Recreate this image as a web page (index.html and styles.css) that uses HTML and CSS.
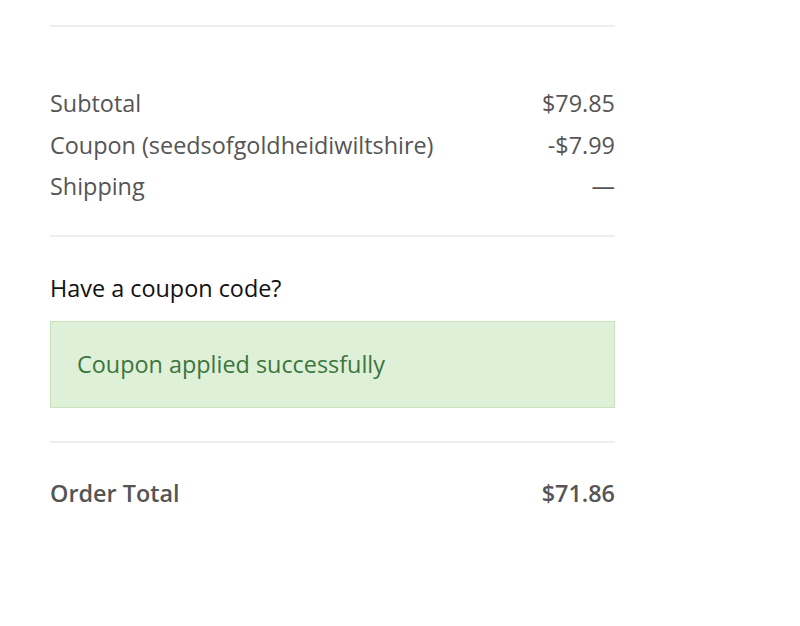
FILE: index.html
```html
<!DOCTYPE html>
<html>
<head>
<meta charset="utf-8">
<link rel="stylesheet" href="styles.css">
</head>
<body>
<div class="summary">
  <div class="totals">
    <div class="row"><span>Subtotal</span><span>$79.85</span></div>
    <div class="row"><span>Coupon (seedsofgoldheidiwiltshire)</span><span>-$7.99</span></div>
    <div class="row"><span>Shipping</span><span>—</span></div>
  </div>
  <div class="coupon">
    <div class="coupon-title">Have a coupon code?</div>
    <div class="notice">Coupon applied successfully</div>
  </div>
  <div class="grand">
    <div class="row total"><span>Order Total</span><span>$71.86</span></div>
  </div>
</div>
</body>
</html>
```
FILE: styles.css
```css
html, body {
  margin: 0;
  padding: 0;
  background: #fff;
}
body {
  font-family: "Open Sans", "Liberation Sans", sans-serif;
  color: #555;
}
.summary {
  width: 565px;
  margin-left: 50px;
  padding-top: 25px;
}
.totals {
  border-top: 2px solid #eeeeee;
  border-bottom: 2px solid #eeeeee;
  padding: 56px 0 27px;
}
.row {
  display: flex;
  justify-content: space-between;
  font-size: 23.4px;
  line-height: 41.5px;
}
.coupon {
  padding: 36px 0 33px;
  border-bottom: 2px solid #eeeeee;
}
.coupon-title {
  font-size: 23.4px;
  color: #111;
  line-height: 30px;
  margin-bottom: 18px;
}
.notice {
  background: #dff0d8;
  border: 1px solid #c9e3bd;
  color: #3c763d;
  font-size: 23.4px;
  padding: 26px 26px;
  line-height: 33px;
}
.grand {
  padding-top: 30px;
}
.total {
  font-weight: 600;
}
```
